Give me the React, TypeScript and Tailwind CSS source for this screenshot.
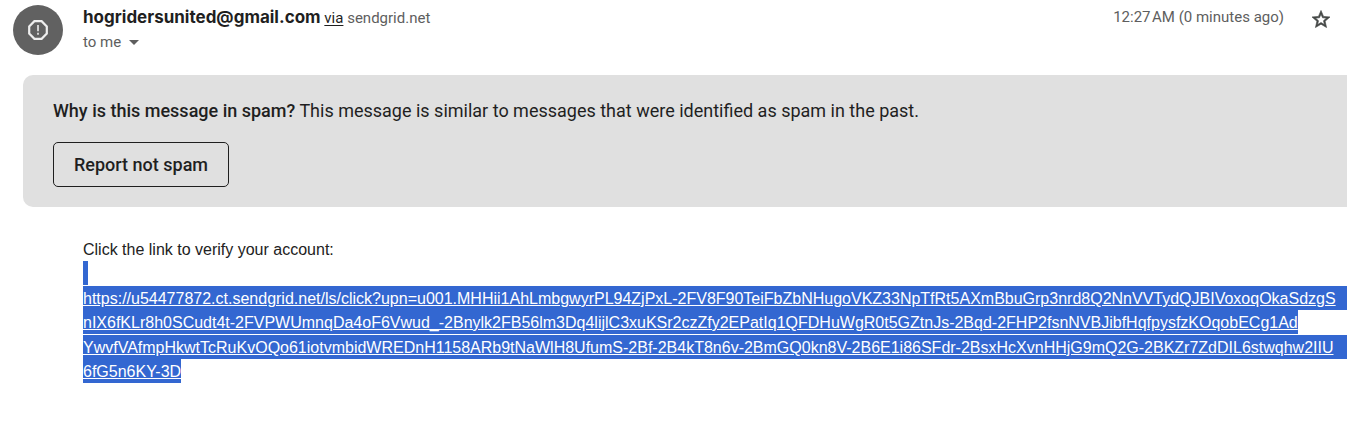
import React from "react";

type LinkLine = { text: string; fill?: boolean };

const linkLines: LinkLine[][] = [
  [
    {
      text: "https://u54477872.ct.sendgrid.net/ls/click?upn=u001.MHHii1AhLmbgwyrPL94ZjPxL-2FV8F90TeiFbZbNHugoVKZ33NpTfRt5AXmBbuGrp3nrd8Q2NnVVTydQJBIVoxoqOkaSdzgS",
      fill: true,
    },
    {
      text: "nIX6fKLr8h0SCudt4t-2FVPWUmnqDa4oF6Vwud_-2Bnylk2FB56lm3Dq4lijlC3xuKSr2czZfy2EPatIq1QFDHuWgR0t5GZtnJs-2Bqd-2FHP2fsnNVBJibfHqfpysfzKOqobECg1Ad",
    },
  ],
  [
    {
      text: "YwvfVAfmpHkwtTcRuKvOQo61iotvmbidWREDnH1158ARb9tNaWlH8UfumS-2Bf-2B4kT8n6v-2BmGQ0kn8V-2B6E1i86SFdr-2BsxHcXvnHHjG9mQ2G-2BKZr7ZdDIL6stwqhw2IIU",
      fill: true,
    },
    { text: "6fG5n6KY-3D" },
  ],
];

function SenderAvatar() {
  return (
    <div className="flex size-[50px] shrink-0 items-center justify-center rounded-full bg-[#616161]">
      <svg viewBox="0 0 20 20" className="size-5" fill="none" aria-hidden="true">
        <path d="M6.4 1.2h7.2L18.8 6.4v7.2L13.6 18.8H6.4L1.2 13.6V6.4z" stroke="#eeeeee" strokeWidth="2.2" />
        <path d="M10 5v6.2M10 12.8v2" stroke="#d0d0d0" strokeWidth="2" />
      </svg>
    </div>
  );
}

function MessageHeader() {
  return (
    <header className="flex items-start pt-[5px] pr-[17px] pl-[13px]">
      <SenderAvatar />
      <div className="ml-5 min-w-0 grow text-[15px] leading-6 text-[#5e5e5e]">
        <div className="whitespace-nowrap">
          <span className="font-[Inter,sans-serif] text-[17px] font-bold text-[#1f1f1f]">
            hogridersunited@gmail.com
          </span>{" "}
          <a href="#via" className="text-[#1f1f1f] underline underline-offset-2">
            via
          </a>{" "}
          sendgrid.net
        </div>
        <button type="button" className="flex items-center gap-2">
          to me
          <svg viewBox="0 0 10 5" className="h-[5px] w-2.5" fill="#5e5e5e" aria-hidden="true">
            <path d="M0 0h10L5 5z" />
          </svg>
        </button>
      </div>
      <time className="text-[15px] leading-6 whitespace-nowrap text-[#5e5e5e]">12:27{"\u200a"}AM (0 minutes ago)</time>
      <button type="button" aria-label="Star message" className="ml-7 flex h-[27px] items-center">
        <svg viewBox="2 2 20 19" className="h-[18px] w-[18px]" fill="#444746" stroke="#444746" strokeWidth="0.7" aria-hidden="true">
          <path d="M22 9.24l-7.19-.62L12 2 9.19 8.63 2 9.24l5.46 4.73L5.82 21 12 17.27 18.18 21l-1.63-7.03L22 9.24zM12 15.4l-3.76 2.27 1-4.28-3.32-2.88 4.38-.38L12 6.1l1.71 4.04 4.38.38-3.32 2.88 1 4.28L12 15.4z" />
        </svg>
      </button>
    </header>
  );
}

function SpamNotice() {
  return (
    <section className="mt-5 ml-[23px] rounded-l-[10px] bg-[#e0e0e0] px-[30px] pt-6 pb-5 text-[18px] leading-6 text-[#1f1f1f]">
      <p>
        <span className="font-medium">Why is this message in spam?</span> This message is similar to messages that were
        identified as spam in the past.
      </p>
      <button
        type="button"
        className="mt-[19px] flex h-[45px] items-center rounded-[5px] border border-[#1f1f1f] px-5 font-medium"
      >
        Report not spam
      </button>
    </section>
  );
}

function MessageBody() {
  return (
    <div className="mt-[30px] ml-[83px] font-['Liberation_Sans',Arial,sans-serif] text-base leading-[22px] whitespace-nowrap text-[#222222]">
      <p className="pt-0.5">Click the link to verify your account:</p>
      <div className="w-[5px] bg-[#3367d1] pt-0.5">&nbsp;</div>
      <a href="#verify" className="mt-px flex flex-col gap-px text-white underline">
        {linkLines.map((group, index) => (
          <span key={index} className="flex flex-col items-start">
            {group.map(({ text, fill }) => (
              <span key={text} className={fill ? "min-w-full bg-[#3367d1] pt-0.5" : "bg-[#3367d1] pt-0.5"}>
                {text}
              </span>
            ))}
          </span>
        ))}
      </a>
    </div>
  );
}

export default function App() {
  return (
    <main className="min-h-screen overflow-hidden bg-white font-[Roboto,'Liberation_Sans',sans-serif]">
      <MessageHeader />
      <SpamNotice />
      <MessageBody />
    </main>
  );
}
